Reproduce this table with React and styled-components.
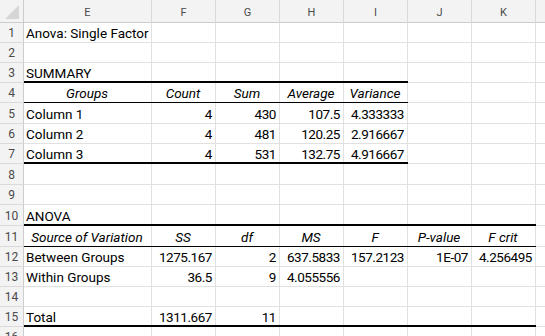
import React from 'react';
import styled, { createGlobalStyle, css } from 'styled-components';

const GlobalStyle = createGlobalStyle`
  html, body { margin: 0; padding: 0; background: #ffffff; overflow: hidden; }
  body { font-family: Roboto, "Liberation Sans", Arial, sans-serif; color: #000; }
`;

const COLS = '24px 128px repeat(8, 64px)';
const GRID = '#e1e1e1';

const Sheet = styled.div`
  width: 545px;
  height: 336px;
  overflow: hidden;
  background: #fff;
`;

const HeaderRow = styled.div`
  display: grid;
  grid-template-columns: ${COLS};
  height: 23px;
  box-sizing: border-box;
  background: #f3f3f3;
  border-bottom: 1px solid #cdcdcd;
`;

const Corner = styled.div`
  position: relative;
  box-sizing: border-box;
  border-right: 1px solid #cdcdcd;
  svg { display: block; }
`;

const ColLetter = styled.div`
  box-sizing: border-box;
  border-right: 1px solid #d9d9d9;
  display: flex;
  justify-content: center;
  padding-top: 3px;
  font-size: 11px;
  line-height: 20px;
  color: #4a4a4a;
`;

const Row = styled.div`
  display: grid;
  grid-template-columns: ${COLS};
  height: ${p => p.$h}px;
`;

const RowNum = styled.div`
  box-sizing: border-box;
  background: #f3f3f3;
  border-right: 1px solid #cdcdcd;
  border-bottom: 1px solid #dadada;
  display: flex;
  align-items: flex-end;
  justify-content: center;
  padding-bottom: 1px;
  font-size: 12px;
  line-height: 16px;
  color: #4a4a4a;
`;

const ruleStyle = {
  thick: css`
    &::after {
      content: '';
      position: absolute;
      left: 0;
      right: -1px;
      bottom: -1px;
      height: 2px;
      background: #000;
    }
  `,
  thin: css`
    &::after {
      content: '';
      position: absolute;
      left: 0;
      right: -1px;
      bottom: -1px;
      height: 1px;
      background: #000;
    }
  `,
};

const Cell = styled.div`
  position: relative;
  min-width: 0;
  box-sizing: border-box;
  border-right: 1px solid ${GRID};
  border-bottom: 1px solid ${GRID};
  display: flex;
  align-items: flex-end;
  justify-content: ${p =>
    p.$align === 'right' ? 'flex-end' : p.$align === 'center' ? 'center' : 'flex-start'};
  padding: 0 3px 1px 2px;
  font-size: 13.5px;
  line-height: 16px;
  white-space: nowrap;
  font-style: ${p => (p.$italic ? 'italic' : 'normal')};
  letter-spacing: ${p => (p.$num ? '-0.45px' : 'normal')};
  ${p => (p.$rule ? ruleStyle[p.$rule] : '')}
`;

const txt = t => ({ t, align: 'left' });
const hd = t => ({ t, align: 'center', italic: true });
const num = t => ({ t, align: 'right', num: true });

const ROWS = [
  { h: 20, cells: [txt('Anova: Single Factor')] },
  { h: 20, cells: [] },
  { h: 20, cells: [txt('SUMMARY')], rule: 'thick', span: 5 },
  { h: 20, cells: [hd('Groups'), hd('Count'), hd('Sum'), hd('Average'), hd('Variance')], rule: 'thin', span: 5 },
  { h: 21, cells: [txt('Column 1'), num('4'), num('430'), num('107.5'), num('4.333333')] },
  { h: 20, cells: [txt('Column 2'), num('4'), num('481'), num('120.25'), num('2.916667')] },
  { h: 20, cells: [txt('Column 3'), num('4'), num('531'), num('132.75'), num('4.916667')], rule: 'thick', span: 5 },
  { h: 21, cells: [] },
  { h: 20, cells: [] },
  { h: 21, cells: [txt('ANOVA')], rule: 'thick', span: 7 },
  {
    h: 21,
    cells: [hd('Source of Variation'), hd('SS'), hd('df'), hd('MS'), hd('F'), hd('P-value'), hd('F crit')],
    rule: 'thin',
    span: 7,
  },
  {
    h: 20,
    cells: [txt('Between Groups'), num('1275.167'), num('2'), num('637.5833'), num('157.2123'), num('1E-07'), num('4.256495')],
  },
  { h: 20, cells: [txt('Within Groups'), num('36.5'), num('9'), num('4.055556')] },
  { h: 20, cells: [] },
  { h: 20, cells: [txt('Total'), num('1311.667'), num('11')], rule: 'thick', span: 7 },
  { h: 20, cells: [] },
];

const LETTERS = ['E', 'F', 'G', 'H', 'I', 'J', 'K', ''];

export default function App() {
  return (
    <>
      <GlobalStyle />
      <Sheet>
        <HeaderRow>
          <Corner>
            <svg width="23" height="22" viewBox="0 0 23 22">
              <polygon points="5,19 19,19 19,5" fill="#d6d6d6" />
            </svg>
          </Corner>
          {LETTERS.map((l, i) => (
            <ColLetter key={i}>{l}</ColLetter>
          ))}
        </HeaderRow>
        {ROWS.map((r, i) => (
          <Row key={i} $h={r.h}>
            <RowNum>{i + 1}</RowNum>
            {LETTERS.map((l, c) => {
              const cell = r.cells[c];
              const rule = r.rule && c < r.span ? r.rule : undefined;
              return (
                <Cell
                  key={c}
                  $align={cell ? cell.align : 'left'}
                  $italic={cell ? cell.italic : false}
                  $num={cell ? cell.num : false}
                  $rule={rule}
                >
                  {cell ? cell.t : ''}
                </Cell>
              );
            })}
          </Row>
        ))}
      </Sheet>
    </>
  );
}
